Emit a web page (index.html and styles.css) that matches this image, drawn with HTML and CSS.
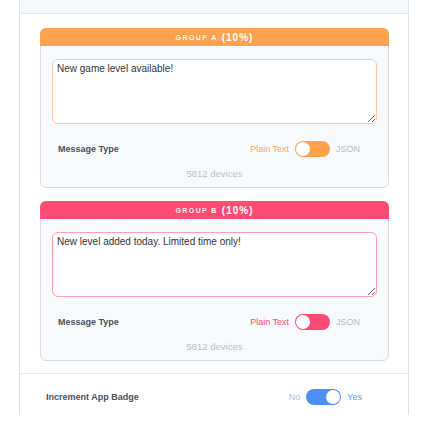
FILE: index.html
```html
<!DOCTYPE html>
<html lang="en">
<head>
  <meta charset="UTF-8" />
  <meta name="viewport" content="width=device-width, initial-scale=1.0" />
  <title>Push Message Groups</title>
  <link rel="stylesheet" href="styles.css">
</head>
<body>
  <div class="panel">
    <div class="panel-top"></div>

    <div class="groups">
      <div class="group group-a">
        <div class="group-head">Group A<span class="pct">(10%)</span></div>
        <div class="group-body">
          <textarea class="message" readonly>New game level available!</textarea>
          <div class="row">
            <span class="row-label">Message Type</span>
            <div class="switch-wrap">
              <span class="opt opt-on">Plain Text</span>
              <span class="switch"><span class="knob"></span></span>
              <span class="opt">JSON</span>
            </div>
          </div>
          <div class="devices">5812 devices</div>
        </div>
      </div>

      <div class="group group-b">
        <div class="group-head">Group B<span class="pct">(10%)</span></div>
        <div class="group-body">
          <textarea class="message" readonly>New level added today. Limited time only!</textarea>
          <div class="row">
            <span class="row-label">Message Type</span>
            <div class="switch-wrap">
              <span class="opt opt-on">Plain Text</span>
              <span class="switch"><span class="knob"></span></span>
              <span class="opt">JSON</span>
            </div>
          </div>
          <div class="devices">5812 devices</div>
        </div>
      </div>
    </div>

    <div class="badge-row">
      <span class="row-label">Increment App Badge</span>
      <div class="switch-wrap">
        <span class="opt">No</span>
        <span class="switch switch-blue"><span class="knob"></span></span>
        <span class="opt opt-yes">Yes</span>
      </div>
    </div>
  </div>
</body>
</html>
```

FILE: styles.css
```css
body {
  margin: 0;
  background: #fff;
  font-family: 'Liberation Sans', Arial, sans-serif;
}
.panel {
  margin-left: 19px;
  width: 388px;
  height: 415px;
  border-left: 1px solid #dcdfe3;
  border-right: 1px solid #dcdfe3;
}
.panel-top {
  height: 13px;
  background: #f6f9fc;
  border-bottom: 1px solid #e5e8ec;
}
.groups {
  padding: 14px 19px 12px 20px;
  display: flex;
  flex-direction: column;
  gap: 13px;
  border-bottom: 1px solid #e6e8eb;
}
.group {
  border: 1px solid #d8dce1;
  border-radius: 6px;
  background: #f7fafd;
}
.group-head {
  margin: -1px -1px 0;
  height: 18px;
  border-radius: 6px 6px 0 0;
  color: rgba(255, 255, 255, 0.92);
  font-size: 7px;
  font-weight: bold;
  letter-spacing: 1.4px;
  text-transform: uppercase;
  display: flex;
  align-items: center;
  justify-content: center;
}
.group-head .pct {
  font-size: 10px;
  letter-spacing: 1px;
  margin-left: 4px;
  color: #fff;
}
.group-a .group-head { background: #ffa24f; }
.group-b .group-head { background: #fe4b75; }
.group-body {
  padding: 13px 11px 7px;
}
.message {
  display: block;
  box-sizing: border-box;
  width: 100%;
  height: 65px;
  margin: 0;
  padding: 3px 4px;
  background: #fff;
  border: 1px solid #ffc9a3;
  border-radius: 6px;
  font-family: 'Liberation Sans', Arial, sans-serif;
  font-size: 10px;
  color: #333;
  outline: none;
}
.group-b .message { border-color: #ff9db4; }
.row {
  display: flex;
  align-items: center;
  justify-content: space-between;
  height: 16px;
  margin-top: 17px;
  padding: 0 17px 0 6px;
}
.row-label {
  font-size: 9px;
  font-weight: bold;
  color: #4b5058;
}
.switch-wrap {
  display: flex;
  align-items: center;
  gap: 6px;
  font-size: 9px;
}
.opt {
  color: #b7bbc1;
}
.group-a .opt-on { color: #ffa24f; }
.group-b .opt-on { color: #fb4a74; }
.switch {
  box-sizing: border-box;
  width: 35px;
  height: 16px;
  border-radius: 8px;
  display: flex;
  align-items: center;
  padding: 1px;
}
.group-a .switch { background: #ffa04b; }
.group-b .switch { background: #fb4a74; }
.knob {
  width: 14px;
  height: 14px;
  border-radius: 50%;
  background: #fff;
}
.switch-blue {
  background: #4e8ff7;
  justify-content: flex-end;
}
.opt-yes {
  color: #5b97f7;
}
.devices {
  margin-top: 11px;
  text-align: center;
  font-size: 9.5px;
  line-height: 12px;
  color: #b9bec5;
}
.badge-row {
  height: 46px;
  display: flex;
  align-items: center;
  justify-content: space-between;
  padding: 0 46px 0 26px;
}
```
